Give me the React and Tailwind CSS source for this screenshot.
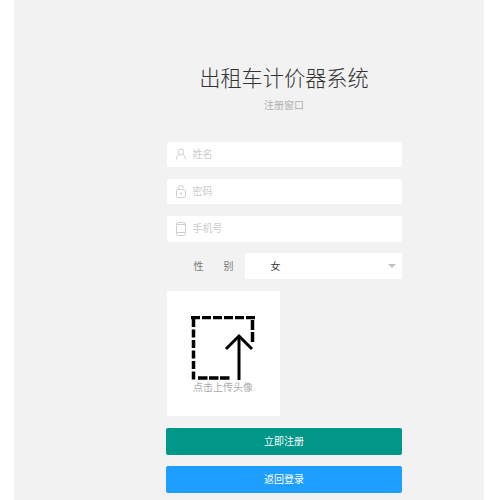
const cjk = "font-['Liberation_Sans','Noto_Sans_CJK_SC',sans-serif]";

function UserIcon() {
  return (
    <svg width="12" height="12" viewBox="0 0 12 12" fill="none" stroke="#cfcfcf" strokeWidth="1">
      <circle cx="6" cy="4" r="3" />
      <path d="M1.500 11.500c0-3 1.500-4.800 3-5.200M10.500 11.500c0-3-1.500-4.800-3-5.200" />
    </svg>
  );
}

function LockIcon() {
  return (
    <svg width="12" height="13" viewBox="0 0 12 13" fill="none" stroke="#cfcfcf" strokeWidth="1">
      <rect x="1.500" y="4.500" width="9" height="8" rx="1" />
      <path d="M3.500 4.500V3a2.500 2.500 0 0 1 5 0" />
      <circle cx="6" cy="8.500" r="0.700" fill="#cfcfcf" />
    </svg>
  );
}

function PhoneIcon() {
  return (
    <svg width="12" height="14" viewBox="0 0 12 14" fill="none" stroke="#cfcfcf" strokeWidth="1">
      <rect x="1.500" y="0.500" width="9" height="13" rx="2" />
      <path d="M1.500 10.500h9M1.500 2.500h9" />
    </svg>
  );
}

function UploadIcon() {
  return (
    <svg width="64" height="66" viewBox="0 0 64 66" fill="none" stroke="#000">
      <path d="M0 1.500H64" strokeWidth="3.500" strokeDasharray="9 2" />
      <path d="M61.500 4V27" strokeWidth="3.500" strokeDasharray="10 2" />
      <path d="M2.500 3V64" strokeWidth="3.500" strokeDasharray="8 2.500" />
      <path d="M7 62H40" strokeWidth="3.500" strokeDasharray="9.500 1.500" />
      <path d="M48 64V20" strokeWidth="3" />
      <path d="M35 33L48 20L61 33" strokeWidth="3" />
    </svg>
  );
}

function Field({ icon, placeholder }) {
  return (
    <div className="flex h-[25.5px] items-center rounded-[2px] bg-white pl-[5px]">
      <div className="flex w-[18px] justify-center">{icon}</div>
      <input
        placeholder={placeholder}
        className="ml-[3px] w-[190px] bg-transparent text-[10px] outline-none placeholder:text-[#cccccc]"
      />
    </div>
  );
}

export default function App() {
  return (
    <div className={`h-[500px] w-[500px] overflow-hidden bg-white pl-[14px] ${cjk}`}>
      <div className="h-full w-[470px] bg-[#f2f2f2] pl-[152px] pt-[65px]">
        <div className="w-[236px]">
          <h2 className="text-center text-[21.2px] leading-[28px] font-light text-[#333]">出租车计价器系统</h2>
          <p className="mt-[6px] text-center text-[10px] leading-[14px] text-[#b0b0b0]">注册窗口</p>

          <div className="ml-[0.5px] mt-[28.5px] flex w-[235px] flex-col gap-[11.8px]">
            <Field icon={<UserIcon />} placeholder="姓名" />
            <Field icon={<LockIcon />} placeholder="密码" />
            <Field icon={<PhoneIcon />} placeholder="手机号" />

            <div className="flex h-[25.5px] items-center">
              <label className="flex w-[78px] justify-between pl-[27px] pr-[11px] text-[10px] text-[#777]">
                <span>性</span>
                <span>别</span>
              </label>
              <div className="flex h-full w-[157px] items-center justify-between bg-white pl-[26px] pr-[6px] text-[10px] text-[#333]">
                <span>女</span>
                <span className="border-x-[4px] border-t-[4px] border-x-transparent border-t-[#c2c2c2]" />
              </div>
            </div>
          </div>

          <div className="ml-[0.5px] mt-[12px] flex h-[125.5px] w-[113px] flex-col items-center bg-white pt-[25.5px]">
            <UploadIcon />
            <p className="mt-[-1px] text-[10px] leading-[14px] text-[#aaa]">点击上传头像</p>
          </div>

          <button className="mt-[12px] block h-[27px] w-full rounded-[2px] bg-[#009688] text-[10px] text-white">立即注册</button>
          <button className="mt-[10.5px] block h-[27px] w-full rounded-[2px] bg-[#1e9fff] text-[10px] text-white">返回登录</button>
        </div>
      </div>
    </div>
  );
}
